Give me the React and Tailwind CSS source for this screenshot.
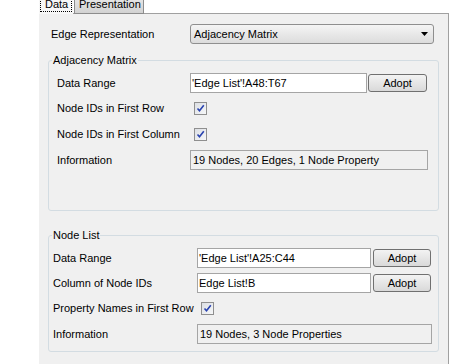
import React from 'react';

// small check box as drawn by the old Windows look and feel
const Check = () => <div className="ml-[4px] w-[13px] h-[13px] border border-[#8f8f8f] bg-gradient-to-br from-[#dcdfe4] to-[#f6f7f8] flex items-center justify-center">
    <svg width="9" height="9" viewBox="0 0 9 9">
      <path d="M1.5 4.5 L3.5 6.8 L7.8 1.2" fill="none" stroke="#2a43b0" strokeWidth="1.6" />
    </svg>
  </div>;

const Adopt = ({ className }) => <button type="button" className={`h-[18px] rounded-[3px] border border-[#707070] bg-gradient-to-b from-[#f3f3f3] to-[#d9d9d9] text-center leading-[16px] ${className}`}>
    Adopt
  </button>;

const Row = ({ label, labelW, children, className = '' }) => <div className={`flex items-center h-[20px] ${className}`}>
    <div className={`shrink-0 ${labelW}`}>{label}</div>
    {children}
  </div>;

const App = () => {
  return <div className="w-[459px] h-[364px] bg-white overflow-hidden text-[11px] text-black font-['Liberation_Sans',Arial,sans-serif]">
      <div className="ml-[39px] w-[410px] h-full flex flex-col">
        {/* tabs, cut off at the top */}
        <div className="flex h-[14px] shrink-0">
          <div className="w-[34px] h-[14px] bg-[#f7f7f7] pl-[1px]">
            <div className="w-[32px] h-[13px] border-r border-b border-l border-dotted border-black pl-[4px] leading-[11px] -mt-px">Data</div>
          </div>
          <div className="w-[1px] h-[14px] border-b border-[#a0a0a0]"></div>
          <div className="w-[70px] h-[14px] border-l border-r border-b border-[#8c8c8c] bg-gradient-to-b from-[#e4e4e4] to-[#d2d2d2] pl-[4px] leading-[11px]">
            <span className="block -mt-px">Presentation</span>
          </div>
          <div className="flex-1 h-[14px] border-b border-[#a0a0a0]"></div>
        </div>

        <div className="flex-1 bg-[#f0f0f0] border-r border-[#a0a0a0]">
          <div className="mt-[10px] flex items-center h-[20px] pl-[12px]">
            <div className="w-[139px] shrink-0">Edge Representation</div>
            <div className="w-[244px] h-[20px] rounded-[3px] border border-[#8f8f8f] bg-gradient-to-b from-[#f5f5f5] to-[#dcdcdc] flex items-center pl-[3px] pr-[5px]">
              <span className="flex-1">Adjacency Matrix</span>
              <svg width="7" height="4" viewBox="0 0 7 4">
                <path d="M0 0 H7 L3.5 4 Z" fill="#000" />
              </svg>
            </div>
          </div>

          <fieldset className="ml-[9px] mt-[10px] w-[391px] border border-[#d3dce2] rounded-[3px] pl-[8px] pb-[40px]">
            <legend className="-ml-[5px] px-px leading-[13px]">Adjacency Matrix</legend>
            <Row label="Data Range" labelW="w-[133px]" className="mt-[6px]">
              <div className="w-[177px] h-[20px] border border-[#a5a5a5] bg-white pl-[1px] leading-[18px]">'Edge List'!A48:T67</div>
              <Adopt className="ml-[1px] w-[59px]" />
            </Row>
            <Row label="Node IDs in First Row" labelW="w-[133px]" className="mt-[5px]">
              <Check />
            </Row>
            <Row label="Node IDs in First Column" labelW="w-[133px]" className="mt-[6px]">
              <Check />
            </Row>
            <Row label="Information" labelW="w-[133px]" className="mt-[6px]">
              <div className="w-[238px] h-[20px] border border-[#a5a5a5] pl-[2px] leading-[18px]">19 Nodes, 20 Edges, 1 Node Property</div>
            </Row>
          </fieldset>

          <fieldset className="ml-[9px] mt-[18px] w-[391px] border border-[#d3dce2] rounded-[3px] pl-[4px] pb-[7px]">
            <legend className="-ml-[1px] px-px leading-[13px]">Node List</legend>
            <Row label="Data Range" labelW="w-[144px]" className="mt-[6px]">
              <div className="w-[174px] h-[20px] border border-[#a5a5a5] bg-white pl-[1px] leading-[18px]">'Edge List'!A25:C44</div>
              <Adopt className="ml-[2px] w-[58px]" />
            </Row>
            <Row label="Column of Node IDs" labelW="w-[144px]" className="mt-[5px]">
              <div className="w-[174px] h-[20px] border border-[#a5a5a5] bg-white pl-[1px] leading-[18px]">Edge List!B</div>
              <Adopt className="ml-[2px] w-[58px]" />
            </Row>
            <Row label="Property Names in First Row" labelW="w-[144px]" className="mt-[5px]">
              <Check />
            </Row>
            <Row label="Information" labelW="w-[144px]" className="mt-[6px]">
              <div className="w-[235px] h-[20px] border border-[#a5a5a5] pl-[2px] leading-[18px]">19 Nodes, 3 Node Properties</div>
            </Row>
          </fieldset>
        </div>
      </div>
    </div>;
};

export default App;
